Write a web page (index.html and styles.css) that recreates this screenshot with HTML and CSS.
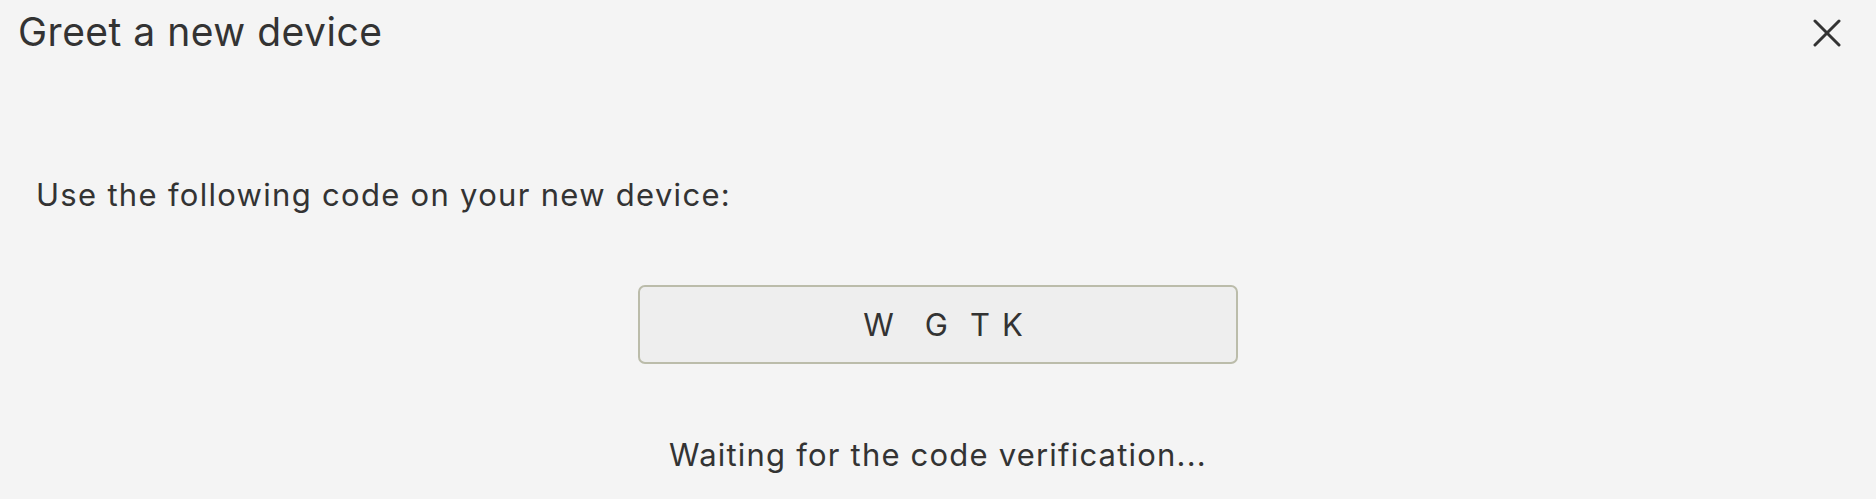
FILE: index.html
```html
<!DOCTYPE html>
<html lang="en">
<head>
<meta charset="utf-8">
<title>Greet a new device</title>
<link rel="stylesheet" href="styles.css">
</head>
<body>
<div class="dialog">
  <header class="header">
    <h1 class="title">Greet a new device</h1>
    <button class="close" aria-label="Close">
      <svg width="28" height="28" viewBox="0 0 28 28" fill="none" stroke="#333333" stroke-width="3" stroke-linecap="round">
        <line x1="2" y1="2" x2="26" y2="26"/>
        <line x1="26" y1="2" x2="2" y2="26"/>
      </svg>
    </button>
  </header>
  <main class="content">
    <p class="intro">Use the following code on your new device:</p>
    <div class="code-box">
      <span class="ch ch-w">W</span><span class="ch ch-g">G</span><span class="ch ch-t">T</span><span class="ch">K</span>
    </div>
    <p class="waiting">Waiting for the code verification...</p>
  </main>
</div>
</body>
</html>
```

FILE: styles.css
```css
html, body {
  margin: 0;
  padding: 0;
  background: #f4f4f4;
}

body {
  font-family: Inter, "Open Sans", "DejaVu Sans", sans-serif;
  color: #333333;
  overflow: hidden;
}

.dialog {
  display: flex;
  flex-direction: column;
}

.header {
  display: flex;
  justify-content: space-between;
  align-items: flex-start;
  padding: 8px 35px 0 18px;
}

.title {
  margin: 0;
  font-size: 39px;
  font-weight: 400;
  line-height: 48px;
  letter-spacing: 0.5px;
}

.close {
  margin-top: 11px;
  padding: 0;
  border: 0;
  background: none;
  width: 28px;
  height: 28px;
  display: flex;
}

.content {
  display: flex;
  flex-direction: column;
}

.intro {
  margin: 119px 0 0;
  padding-left: 36px;
  font-size: 31px;
  line-height: 40px;
  letter-spacing: 1.3px;
}

.code-box {
  box-sizing: border-box;
  width: 600px;
  height: 79px;
  margin: 70px auto 0;
  padding-left: 10px;
  border: 2px solid #bbbcaa;
  border-radius: 7px;
  background: #eeeeee;
  display: flex;
  justify-content: center;
  align-items: center;
  font-size: 31px;
  line-height: 40px;
}

.ch-w { margin-right: 31px; }
.ch-g { margin-right: 22px; }
.ch-t { margin-right: 12px; }

.waiting {
  margin: 71px 0 0;
  text-align: center;
  font-size: 31px;
  line-height: 40px;
  letter-spacing: 1.2px;
}
```
